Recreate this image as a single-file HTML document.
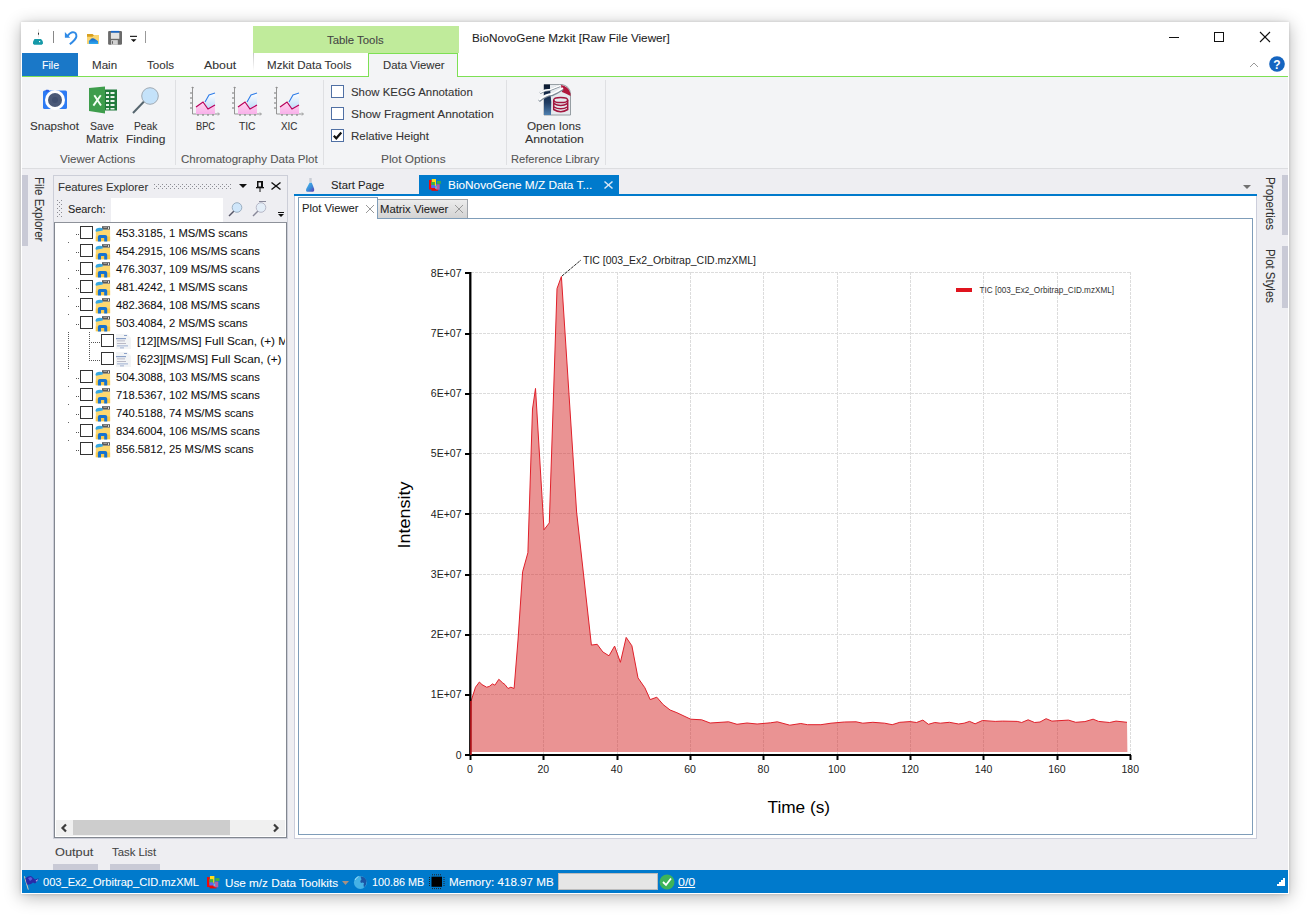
<!DOCTYPE html>
<html><head><meta charset="utf-8"><title>BioNovoGene Mzkit</title>
<style>
html,body{margin:0;padding:0;}
body{width:1311px;height:916px;position:relative;overflow:hidden;background:#ffffff;font-family:"Liberation Sans", sans-serif;}
.t{position:absolute;white-space:nowrap;font-family:"Liberation Sans", sans-serif;-webkit-text-stroke:0.08px currentColor;}
.r{position:absolute;}
svg.r{overflow:visible;}
</style></head><body>
<div class="r" style="left:21px;top:22px;width:1268px;height:872px;background:#ffffff;box-shadow:0 0 3px rgba(0,0,0,0.14),0 3px 16px rgba(0,0,0,0.30);"></div>
<div class="r" style="left:253px;top:26px;width:206px;height:27px;background:#c0eb9b;"></div>
<div class="t" style="left:327.00px;top:35.43px;font-size:11.3px;line-height:11.3px;color:#444;transform:scaleX(1.0053);transform-origin:0 0;">Table Tools</div>
<div class="t" style="left:472.00px;top:33.43px;font-size:11.3px;line-height:11.3px;color:#1e1e1e;transform:scaleX(1.0374);transform-origin:0 0;">BioNovoGene Mzkit [Raw File Viewer]</div>
<svg class="r" style="left:1160px;top:28px" width="120" height="20" viewBox="0 0 120 20"><line x1="9" y1="9.5" x2="19" y2="9.5" stroke="#111" stroke-width="1"/><rect x="54.5" y="4.5" width="9" height="9" fill="none" stroke="#111" stroke-width="1"/><line x1="100" y1="4" x2="110" y2="14" stroke="#111" stroke-width="1.1"/><line x1="110" y1="4" x2="100" y2="14" stroke="#111" stroke-width="1.1"/></svg>
<svg class="r" style="left:28px;top:26px" width="125" height="24" viewBox="0 0 125 24"><line x1="10.5" y1="3.2" x2="10.5" y2="11.5" stroke="#e4e4e4" stroke-width="1"/><rect x="10" y="6.7" width="1" height="2" fill="#333"/><path d="M6.5 12.9 L13 12.9 L14 14.2 L14.9 15.8 L14.9 17.6 L13.8 18.8 L6 18.8 L5 17.6 L5 15.8 L5.8 14.2 Z" fill="#1599a8"/><rect x="11" y="15" width="1.2" height="1.2" fill="#fff"/><line x1="25.5" y1="5" x2="25.5" y2="17" stroke="#888" stroke-width="1"/><path d="M39.5 10 Q42 6.2 45 6.1 Q48.6 6.3 48.4 10.5 Q48 13.3 41.8 18.3" fill="none" stroke="#2f8ae6" stroke-width="1.9"/><path d="M36.9 6 L36.9 11.8 L42.2 11.8 Z" fill="#2f8ae6"/><defs><linearGradient id="qbl" x1="0" y1="0" x2="0" y2="1"><stop offset="0" stop-color="#1262c8"/><stop offset="1" stop-color="#30aaf0"/></linearGradient></defs><rect x="59" y="9" width="12" height="9" fill="#f9d572"/><path d="M59 7.9 L64.5 7.9 L66 9.2 L64.5 10.7 L59 10.7 Z" fill="#d8a020"/><path d="M60.9 18 L60.9 15 L62.2 13.8 L63.5 12.6 L65 12.2 L66.5 12.8 L68 13.8 L70.1 15.2 L70.1 18 Z" fill="url(#qbl)"/><rect x="80.1" y="4.9" width="13.9" height="13.9" rx="1.2" fill="#6a6a6a"/><rect x="82.9" y="4.9" width="8.4" height="1.9" fill="#1a68c8"/><rect x="82.9" y="6.8" width="8.4" height="6" fill="#e2e2e2"/><rect x="83.1" y="14.1" width="6.7" height="4.7" fill="#d2d2d2"/><rect x="84.1" y="15.2" width="0.9" height="2.6" fill="#555"/><rect x="102" y="9.8" width="7" height="1.1" fill="#111"/><path d="M102.8 13.2 L108.5 13.2 L105.65 16.1 Z" fill="#111"/><line x1="117.5" y1="5" x2="117.5" y2="17" stroke="#999" stroke-width="1"/></svg>
<div class="r" style="left:22px;top:53px;width:56px;height:23px;background:#1a78c8;"></div>
<div class="t" style="left:41.50px;top:60.43px;font-size:11.3px;line-height:11.3px;color:#ffffff;transform:scaleX(0.9392);transform-origin:0 0;">File</div>
<div class="t" style="left:92.40px;top:60.43px;font-size:11.3px;line-height:11.3px;color:#333;transform:scaleX(1.0246);transform-origin:0 0;">Main</div>
<div class="t" style="left:146.70px;top:60.43px;font-size:11.3px;line-height:11.3px;color:#333;transform:scaleX(1.0266);transform-origin:0 0;">Tools</div>
<div class="t" style="left:203.90px;top:60.43px;font-size:11.3px;line-height:11.3px;color:#333;transform:scaleX(1.0884);transform-origin:0 0;">About</div>
<div class="r" style="left:253px;top:53px;width:1px;height:18px;background:linear-gradient(#c8c8c8,#ffffff);"></div>
<div class="t" style="left:267.40px;top:60.43px;font-size:11.3px;line-height:11.3px;color:#333;transform:scaleX(1.0231);transform-origin:0 0;">Mzkit Data Tools</div>
<div class="r" style="left:22px;top:76px;width:1266px;height:1px;background:#7de054;"></div>
<div class="r" style="left:368px;top:53px;width:90px;height:24px;background:#f3f4f6;box-sizing:border-box;border:1px solid #7de054;border-bottom:none;"></div>
<div class="t" style="left:382.60px;top:60.43px;font-size:11.3px;line-height:11.3px;color:#333;transform:scaleX(1.0033);transform-origin:0 0;">Data Viewer</div>
<svg class="r" style="left:1248px;top:57px" width="40" height="16" viewBox="0 0 40 16"><path d="M2 10 L6 6 L10 10" fill="none" stroke="#999" stroke-width="1"/><circle cx="29" cy="7" r="7.8" fill="#1565c0"/><text x="29" y="11.5" text-anchor="middle" font-family="Liberation Sans" font-weight="bold" font-size="12" fill="#fff">?</text></svg>
<div class="r" style="left:22px;top:77px;width:1266px;height:91px;background:#f3f4f6;"></div>
<div class="r" style="left:22px;top:168px;width:1266px;height:1px;background:#dcdde0;"></div>
<svg class="r" style="left:30px;top:82px" width="140" height="36" viewBox="0 0 140 36"><rect x="13" y="8.6" width="24" height="18.4" rx="1.5" fill="#2d7bf4"/><rect x="15.5" y="7.8" width="3.5" height="2" rx="0.8" fill="#2a5ee8"/><circle cx="25" cy="18" r="10" fill="#fff"/><circle cx="25" cy="18" r="7" fill="#4b5a78"/><circle cx="25" cy="18" r="3" fill="#405070"/><rect x="74" y="7.5" width="13" height="21" fill="#217a3c"/><path d="M59 6 L75 4.5 L75 31.5 L59 29 Z" fill="#3e9d4c"/><path d="M64.3 13.2 L71 23.6 M70.8 13.2 L63.4 23.6" stroke="#f4fff4" stroke-width="1.9" fill="none"/><g fill="#e8f4ea"><rect x="76" y="10" width="3" height="2"/><rect x="80.5" y="10" width="4" height="2"/><rect x="76" y="14" width="3" height="2"/><rect x="80.5" y="14" width="4" height="2"/><rect x="76" y="18" width="3" height="2"/><rect x="80.5" y="18" width="4" height="2"/><rect x="76" y="22" width="3" height="2"/><rect x="80.5" y="22" width="4" height="2"/><rect x="76" y="26" width="3" height="1.5"/><rect x="80.5" y="26" width="4" height="1.5"/></g><line x1="114.5" y1="19" x2="103" y2="31" stroke="#56666f" stroke-width="2"/><circle cx="120" cy="14" r="8.3" fill="#c4e2fa" stroke="#a0aab4" stroke-width="1"/></svg>
<div class="t" style="left:30.20px;top:121.43px;font-size:11.3px;line-height:11.3px;color:#333;transform:scaleX(1.0232);transform-origin:0 0;">Snapshot</div>
<div class="t" style="left:90.00px;top:121.43px;font-size:11.3px;line-height:11.3px;color:#333;transform:scaleX(0.9297);transform-origin:0 0;">Save</div>
<div class="t" style="left:86.30px;top:134.43px;font-size:11.3px;line-height:11.3px;color:#333;transform:scaleX(1.0458);transform-origin:0 0;">Matrix</div>
<div class="t" style="left:134.00px;top:121.43px;font-size:11.3px;line-height:11.3px;color:#333;transform:scaleX(0.9066);transform-origin:0 0;">Peak</div>
<div class="t" style="left:126.40px;top:134.43px;font-size:11.3px;line-height:11.3px;color:#333;transform:scaleX(1.0623);transform-origin:0 0;">Finding</div>
<div class="t" style="left:60.40px;top:154.43px;font-size:11.3px;line-height:11.3px;color:#555;transform:scaleX(1.0190);transform-origin:0 0;">Viewer Actions</div>
<div class="r" style="left:175px;top:80px;width:1px;height:85px;background:#dfe0e3;"></div>
<svg class="r" style="left:189px;top:84.5px" width="120" height="32" viewBox="0 0 120 32"><defs><linearGradient id="gb" x1="0" y1="0" x2="0" y2="1"><stop offset="0" stop-color="#fff"/><stop offset="1" stop-color="#a8d0f8"/></linearGradient><linearGradient id="gp" x1="0" y1="0" x2="0" y2="1"><stop offset="0" stop-color="#ffd6ee"/><stop offset="1" stop-color="#f8b0ea"/></linearGradient></defs><g transform="translate(1,0)"><path d="M2.5 2 L2.5 29 L29 29" fill="none" stroke="#8a8a8a" stroke-width="0.9"/><path d="M1.5 3 L2.5 2 L4 3" fill="none" stroke="#8a8a8a" stroke-width="0.8"/><path d="M28 27.5 L29.5 29 L28 30.5" fill="none" stroke="#8a8a8a" stroke-width="0.8"/><g stroke="#777" stroke-width="1"><line x1="0" y1="8" x2="2" y2="8"/><line x1="0" y1="13" x2="2" y2="13"/><line x1="0" y1="18" x2="2" y2="18"/><line x1="0" y1="23" x2="2" y2="23"/><line x1="8" y1="29" x2="8" y2="31"/><line x1="13" y1="29" x2="13" y2="31"/><line x1="18" y1="29" x2="18" y2="31"/><line x1="23" y1="29" x2="23" y2="31"/></g><path d="M15 17 L19 10 L22 9 L25 8 L25 29 L15 29 Z" fill="url(#gb)"/><path d="M6 22 L13 17 L18 24 L25 20 L25 29 L6 29 Z" fill="url(#gp)"/><path d="M15 17 L19 10 L22 9 L25 8" fill="none" stroke="#2f7de8" stroke-width="1.1"/><path d="M6 22 L13 17 L18 24 L25 20" fill="none" stroke="#b8005a" stroke-width="1.2"/></g><g transform="translate(43,0)"><path d="M2.5 2 L2.5 29 L29 29" fill="none" stroke="#8a8a8a" stroke-width="0.9"/><path d="M1.5 3 L2.5 2 L4 3" fill="none" stroke="#8a8a8a" stroke-width="0.8"/><path d="M28 27.5 L29.5 29 L28 30.5" fill="none" stroke="#8a8a8a" stroke-width="0.8"/><g stroke="#777" stroke-width="1"><line x1="0" y1="8" x2="2" y2="8"/><line x1="0" y1="13" x2="2" y2="13"/><line x1="0" y1="18" x2="2" y2="18"/><line x1="0" y1="23" x2="2" y2="23"/><line x1="8" y1="29" x2="8" y2="31"/><line x1="13" y1="29" x2="13" y2="31"/><line x1="18" y1="29" x2="18" y2="31"/><line x1="23" y1="29" x2="23" y2="31"/></g><path d="M15 17 L19 10 L22 9 L25 8 L25 29 L15 29 Z" fill="url(#gb)"/><path d="M6 22 L13 17 L18 24 L25 20 L25 29 L6 29 Z" fill="url(#gp)"/><path d="M15 17 L19 10 L22 9 L25 8" fill="none" stroke="#2f7de8" stroke-width="1.1"/><path d="M6 22 L13 17 L18 24 L25 20" fill="none" stroke="#b8005a" stroke-width="1.2"/></g><g transform="translate(85,0)"><path d="M2.5 2 L2.5 29 L29 29" fill="none" stroke="#8a8a8a" stroke-width="0.9"/><path d="M1.5 3 L2.5 2 L4 3" fill="none" stroke="#8a8a8a" stroke-width="0.8"/><path d="M28 27.5 L29.5 29 L28 30.5" fill="none" stroke="#8a8a8a" stroke-width="0.8"/><g stroke="#777" stroke-width="1"><line x1="0" y1="8" x2="2" y2="8"/><line x1="0" y1="13" x2="2" y2="13"/><line x1="0" y1="18" x2="2" y2="18"/><line x1="0" y1="23" x2="2" y2="23"/><line x1="8" y1="29" x2="8" y2="31"/><line x1="13" y1="29" x2="13" y2="31"/><line x1="18" y1="29" x2="18" y2="31"/><line x1="23" y1="29" x2="23" y2="31"/></g><path d="M15 17 L19 10 L22 9 L25 8 L25 29 L15 29 Z" fill="url(#gb)"/><path d="M6 22 L13 17 L18 24 L25 20 L25 29 L6 29 Z" fill="url(#gp)"/><path d="M15 17 L19 10 L22 9 L25 8" fill="none" stroke="#2f7de8" stroke-width="1.1"/><path d="M6 22 L13 17 L18 24 L25 20" fill="none" stroke="#b8005a" stroke-width="1.2"/></g></svg>
<div class="t" style="left:196.30px;top:121.43px;font-size:11.3px;line-height:11.3px;color:#333;transform:scaleX(0.8182);transform-origin:0 0;">BPC</div>
<div class="t" style="left:238.60px;top:121.43px;font-size:11.3px;line-height:11.3px;color:#333;transform:scaleX(0.9061);transform-origin:0 0;">TIC</div>
<div class="t" style="left:280.60px;top:121.43px;font-size:11.3px;line-height:11.3px;color:#333;transform:scaleX(0.8723);transform-origin:0 0;">XIC</div>
<div class="t" style="left:180.50px;top:154.43px;font-size:11.3px;line-height:11.3px;color:#555;transform:scaleX(1.0218);transform-origin:0 0;">Chromatography Data Plot</div>
<div class="r" style="left:323px;top:80px;width:1px;height:85px;background:#dfe0e3;"></div>
<div class="r" style="left:331px;top:85px;width:13px;height:13px;background:#fff;box-sizing:border-box;border:1px solid #5070a4;"></div>
<div class="t" style="left:351.30px;top:86.93px;font-size:11.3px;line-height:11.3px;color:#333;transform:scaleX(1.0100);transform-origin:0 0;">Show KEGG Annotation</div>
<div class="r" style="left:331px;top:107px;width:13px;height:13px;background:#fff;box-sizing:border-box;border:1px solid #5070a4;"></div>
<div class="t" style="left:351.30px;top:108.93px;font-size:11.3px;line-height:11.3px;color:#333;transform:scaleX(1.0486);transform-origin:0 0;">Show Fragment Annotation</div>
<div class="r" style="left:331px;top:129px;width:13px;height:13px;background:#fff;box-sizing:border-box;border:1px solid #5070a4;"></div>
<svg class="r" style="left:331px;top:129px" width="13" height="13" viewBox="0 0 13 13"><path d="M2.8 6.8 L5.3 9.3 L10.3 3.6" fill="none" stroke="#111" stroke-width="2.2"/></svg>
<div class="t" style="left:351.30px;top:130.93px;font-size:11.3px;line-height:11.3px;color:#333;transform:scaleX(1.0170);transform-origin:0 0;">Relative Height</div>
<div class="t" style="left:381.30px;top:154.43px;font-size:11.3px;line-height:11.3px;color:#555;transform:scaleX(1.0506);transform-origin:0 0;">Plot Options</div>
<div class="r" style="left:506px;top:80px;width:1px;height:85px;background:#dfe0e3;"></div>
<svg class="r" style="left:536px;top:82px" width="38" height="36" viewBox="0 0 38 36"><defs><linearGradient id="spn" x1="0" y1="0" x2="0" y2="1"><stop offset="0" stop-color="#0c1a30"/><stop offset="0.6" stop-color="#1f3c62"/><stop offset="1" stop-color="#4f80b0"/></linearGradient></defs><path d="M8 2.5 L26 2.5 Q34 4 34.5 12 L34.5 33 L8 33 Z" fill="#e6eaee" stroke="#8c949a" stroke-width="0.9"/><path d="M25 3 Q32.5 4 34.5 11.5 L34.5 14 Q30 11.5 26 10 Z" fill="#b0183c"/><path d="M8 2.5 L14 2.5 L14 6 Q16 20 15 33 L8 33 Z" fill="url(#spn)"/><path d="M3 19 Q10 13 16 13 Q21 11 27 7" fill="none" stroke="#7d8a96" stroke-width="2.6"/><path d="M3 18 Q10 12 16 12 Q21 10 27 6" fill="none" stroke="#ffffff" stroke-width="1.8"/><path d="M4 11 Q9 8 14 8 Q19 6 24 4" fill="none" stroke="#7d8a96" stroke-width="2.2"/><path d="M4 10.5 Q9 7.5 14 7.5 Q19 5.5 24 3.5" fill="none" stroke="#ffffff" stroke-width="1.5"/><g fill="none" stroke="#a3173f" stroke-width="1.5"><ellipse cx="24.7" cy="18" rx="7" ry="2.6"/><path d="M17.7 18 L17.7 27.5 Q24.7 32 31.7 27.5 L31.7 18"/><path d="M17.7 21.5 Q24.7 25.5 31.7 21.5"/><path d="M17.7 24.8 Q24.7 28.8 31.7 24.8"/></g></svg>
<div class="t" style="left:527.00px;top:121.03px;font-size:11.3px;line-height:11.3px;color:#333;transform:scaleX(1.0347);transform-origin:0 0;">Open Ions</div>
<div class="t" style="left:525.00px;top:133.73px;font-size:11.3px;line-height:11.3px;color:#333;transform:scaleX(1.0892);transform-origin:0 0;">Annotation</div>
<div class="t" style="left:511.10px;top:154.43px;font-size:11.3px;line-height:11.3px;color:#555;transform:scaleX(0.9821);transform-origin:0 0;">Reference Library</div>
<div class="r" style="left:605px;top:80px;width:1px;height:85px;background:#dfe0e3;"></div>
<div class="r" style="left:22px;top:169px;width:1266px;height:701px;background:#eeeef2;"></div>
<div class="r" style="left:22px;top:175px;width:6px;height:71px;background:#c9cad6;"></div>
<div class="t" style="left:32px;top:176.5px;font-size:12px;line-height:14px;color:#333;writing-mode:vertical-rl;transform:scaleY(0.955);transform-origin:0 0;">File Explorer</div>
<div class="r" style="left:1282px;top:175px;width:6px;height:60px;background:#c9cad6;"></div>
<div class="t" style="left:1263px;top:176.5px;font-size:12px;line-height:14px;color:#333;writing-mode:vertical-rl;transform:scaleY(0.97);transform-origin:0 0;">Properties</div>
<div class="r" style="left:1282px;top:246px;width:6px;height:62px;background:#c9cad6;"></div>
<div class="t" style="left:1263px;top:249px;font-size:12px;line-height:14px;color:#333;writing-mode:vertical-rl;transform:scaleY(0.952);transform-origin:0 0;">Plot Styles</div>
<div class="r" style="left:53px;top:175px;width:235px;height:664px;background:#eeeef2;box-sizing:border-box;border:1px solid #ccced8;"></div>
<div class="t" style="left:58.40px;top:182.03px;font-size:11.3px;line-height:11.3px;color:#333;transform:scaleX(1.0045);transform-origin:0 0;">Features Explorer</div>
<svg class="r" style="left:154px;top:184px" width="78" height="5" viewBox="0 0 78 5"><defs><pattern id="dg" width="4" height="4" patternUnits="userSpaceOnUse"><rect x="0" y="0" width="1" height="1" fill="#8c8c94"/><rect x="2" y="2" width="1" height="1" fill="#8c8c94"/></pattern></defs><rect width="78" height="5" fill="url(#dg)"/></svg>
<svg class="r" style="left:236px;top:178px" width="50" height="16" viewBox="0 0 50 16"><path d="M3 6 L11 6 L7 10 Z" fill="#111"/><rect x="21.75" y="3.75" width="4.5" height="5.5" fill="none" stroke="#111" stroke-width="1.5"/><rect x="25" y="3" width="1.5" height="6" fill="#111"/><rect x="20" y="9" width="8" height="1.3" fill="#111"/><rect x="23.5" y="10" width="1" height="4" fill="#111"/><line x1="35.5" y1="4.5" x2="44.5" y2="11.5" stroke="#111" stroke-width="1.4"/><line x1="44.5" y1="4.5" x2="35.5" y2="11.5" stroke="#111" stroke-width="1.4"/></svg>
<svg class="r" style="left:57px;top:200px" width="5" height="17" viewBox="0 0 5 17"><defs><pattern id="dg2" width="4" height="4" patternUnits="userSpaceOnUse"><rect x="0" y="0" width="1" height="1" fill="#8c8c94"/><rect x="2" y="2" width="1" height="1" fill="#8c8c94"/></pattern></defs><rect width="5" height="17" fill="url(#dg2)"/></svg>
<div class="t" style="left:68.00px;top:204.43px;font-size:11.3px;line-height:11.3px;color:#1e1e1e;transform:scaleX(0.9639);transform-origin:0 0;">Search:</div>
<div class="r" style="left:111px;top:198px;width:112px;height:24px;background:#ffffff;"></div>
<svg class="r" style="left:226px;top:200px" width="62" height="20" viewBox="0 0 62 20"><line x1="3" y1="16" x2="8" y2="11" stroke="#556" stroke-width="1.5"/><circle cx="11" cy="7.5" r="4.8" fill="#cfe6fa" stroke="#8aa0b4" stroke-width="0.8"/><line x1="27" y1="16" x2="32" y2="11" stroke="#889" stroke-width="1.5"/><circle cx="35" cy="7.5" r="4.8" fill="#e4eef8" stroke="#aab" stroke-width="0.8"/><rect x="33" y="1" width="7" height="1" fill="#889"/><rect x="52" y="12" width="6" height="1" fill="#111"/><path d="M52 14 L58 14 L55 17 Z" fill="#111"/></svg>
<div class="r" style="left:54px;top:222px;width:233px;height:616px;background:#ffffff;box-sizing:border-box;border:1px solid #828790;border-top-color:#8e929a;"></div>
<div class="r" style="left:0;top:0;width:285px;height:820px;overflow:hidden;"><div class="r" style="left:80px;top:226px;width:13px;height:13px;background:#fff;box-sizing:border-box;border:1px solid #333;"></div><svg class="r" style="left:95px;top:226px" width="16" height="16" viewBox="0 0 16 16"><path d="M0.8 4.6 L7 4.6 L8.6 3.6 L15.1 3.6 L15.1 15.2 L0.8 15.2 Z" fill="#fcd870"/><rect x="0.8" y="10.5" width="14.3" height="4.7" fill="#f9ca4c"/><rect x="7" y="0.2" width="8" height="3.4" fill="#5a5a5a"/><rect x="8.5" y="1" width="3.5" height="1" fill="#9a9a9a"/><rect x="13" y="1" width="1" height="2" fill="#ddd"/><path d="M0.5 4.5 Q0.5 2.3 3 2.1 Q5 1.5 7.5 2.2 L7.8 4.6 L1 5.8 Z" fill="#35a6e0"/><path d="M2.9 15.4 L2.9 10.8 Q2.9 8.9 4.9 8.9 L10.2 8.9 Q12.2 8.9 12.2 10.8 L12.2 15.4 L9.2 15.4 L9.2 12 L6 12 L6 15.4 Z" fill="#1673d0"/></svg><div class="t" style="left:115.50px;top:228.43px;font-size:11.3px;line-height:11.3px;color:#111;transform:scaleX(0.9932);transform-origin:0 0;">453.3185, 1 MS/MS scans</div><div class="r" style="left:76px;top:234px;width:3px;height:1px;background:repeating-linear-gradient(90deg,#555 0 1px,transparent 1px 2px);"></div><div class="r" style="left:68px;top:242px;width:1px;height:1px;background:#666;"></div><div class="r" style="left:80px;top:244px;width:13px;height:13px;background:#fff;box-sizing:border-box;border:1px solid #333;"></div><svg class="r" style="left:95px;top:244px" width="16" height="16" viewBox="0 0 16 16"><path d="M0.8 4.6 L7 4.6 L8.6 3.6 L15.1 3.6 L15.1 15.2 L0.8 15.2 Z" fill="#fcd870"/><rect x="0.8" y="10.5" width="14.3" height="4.7" fill="#f9ca4c"/><rect x="7" y="0.2" width="8" height="3.4" fill="#5a5a5a"/><rect x="8.5" y="1" width="3.5" height="1" fill="#9a9a9a"/><rect x="13" y="1" width="1" height="2" fill="#ddd"/><path d="M0.5 4.5 Q0.5 2.3 3 2.1 Q5 1.5 7.5 2.2 L7.8 4.6 L1 5.8 Z" fill="#35a6e0"/><path d="M2.9 15.4 L2.9 10.8 Q2.9 8.9 4.9 8.9 L10.2 8.9 Q12.2 8.9 12.2 10.8 L12.2 15.4 L9.2 15.4 L9.2 12 L6 12 L6 15.4 Z" fill="#1673d0"/></svg><div class="t" style="left:115.50px;top:246.43px;font-size:11.3px;line-height:11.3px;color:#111;transform:scaleX(0.9917);transform-origin:0 0;">454.2915, 106 MS/MS scans</div><div class="r" style="left:76px;top:252px;width:3px;height:1px;background:repeating-linear-gradient(90deg,#555 0 1px,transparent 1px 2px);"></div><div class="r" style="left:68px;top:260px;width:1px;height:1px;background:#666;"></div><div class="r" style="left:80px;top:262px;width:13px;height:13px;background:#fff;box-sizing:border-box;border:1px solid #333;"></div><svg class="r" style="left:95px;top:262px" width="16" height="16" viewBox="0 0 16 16"><path d="M0.8 4.6 L7 4.6 L8.6 3.6 L15.1 3.6 L15.1 15.2 L0.8 15.2 Z" fill="#fcd870"/><rect x="0.8" y="10.5" width="14.3" height="4.7" fill="#f9ca4c"/><rect x="7" y="0.2" width="8" height="3.4" fill="#5a5a5a"/><rect x="8.5" y="1" width="3.5" height="1" fill="#9a9a9a"/><rect x="13" y="1" width="1" height="2" fill="#ddd"/><path d="M0.5 4.5 Q0.5 2.3 3 2.1 Q5 1.5 7.5 2.2 L7.8 4.6 L1 5.8 Z" fill="#35a6e0"/><path d="M2.9 15.4 L2.9 10.8 Q2.9 8.9 4.9 8.9 L10.2 8.9 Q12.2 8.9 12.2 10.8 L12.2 15.4 L9.2 15.4 L9.2 12 L6 12 L6 15.4 Z" fill="#1673d0"/></svg><div class="t" style="left:115.50px;top:264.43px;font-size:11.3px;line-height:11.3px;color:#111;transform:scaleX(0.9917);transform-origin:0 0;">476.3037, 109 MS/MS scans</div><div class="r" style="left:76px;top:270px;width:3px;height:1px;background:repeating-linear-gradient(90deg,#555 0 1px,transparent 1px 2px);"></div><div class="r" style="left:68px;top:278px;width:1px;height:1px;background:#666;"></div><div class="r" style="left:80px;top:280px;width:13px;height:13px;background:#fff;box-sizing:border-box;border:1px solid #333;"></div><svg class="r" style="left:95px;top:280px" width="16" height="16" viewBox="0 0 16 16"><path d="M0.8 4.6 L7 4.6 L8.6 3.6 L15.1 3.6 L15.1 15.2 L0.8 15.2 Z" fill="#fcd870"/><rect x="0.8" y="10.5" width="14.3" height="4.7" fill="#f9ca4c"/><rect x="7" y="0.2" width="8" height="3.4" fill="#5a5a5a"/><rect x="8.5" y="1" width="3.5" height="1" fill="#9a9a9a"/><rect x="13" y="1" width="1" height="2" fill="#ddd"/><path d="M0.5 4.5 Q0.5 2.3 3 2.1 Q5 1.5 7.5 2.2 L7.8 4.6 L1 5.8 Z" fill="#35a6e0"/><path d="M2.9 15.4 L2.9 10.8 Q2.9 8.9 4.9 8.9 L10.2 8.9 Q12.2 8.9 12.2 10.8 L12.2 15.4 L9.2 15.4 L9.2 12 L6 12 L6 15.4 Z" fill="#1673d0"/></svg><div class="t" style="left:115.50px;top:282.43px;font-size:11.3px;line-height:11.3px;color:#111;transform:scaleX(0.9932);transform-origin:0 0;">481.4242, 1 MS/MS scans</div><div class="r" style="left:76px;top:288px;width:3px;height:1px;background:repeating-linear-gradient(90deg,#555 0 1px,transparent 1px 2px);"></div><div class="r" style="left:68px;top:296px;width:1px;height:1px;background:#666;"></div><div class="r" style="left:80px;top:298px;width:13px;height:13px;background:#fff;box-sizing:border-box;border:1px solid #333;"></div><svg class="r" style="left:95px;top:298px" width="16" height="16" viewBox="0 0 16 16"><path d="M0.8 4.6 L7 4.6 L8.6 3.6 L15.1 3.6 L15.1 15.2 L0.8 15.2 Z" fill="#fcd870"/><rect x="0.8" y="10.5" width="14.3" height="4.7" fill="#f9ca4c"/><rect x="7" y="0.2" width="8" height="3.4" fill="#5a5a5a"/><rect x="8.5" y="1" width="3.5" height="1" fill="#9a9a9a"/><rect x="13" y="1" width="1" height="2" fill="#ddd"/><path d="M0.5 4.5 Q0.5 2.3 3 2.1 Q5 1.5 7.5 2.2 L7.8 4.6 L1 5.8 Z" fill="#35a6e0"/><path d="M2.9 15.4 L2.9 10.8 Q2.9 8.9 4.9 8.9 L10.2 8.9 Q12.2 8.9 12.2 10.8 L12.2 15.4 L9.2 15.4 L9.2 12 L6 12 L6 15.4 Z" fill="#1673d0"/></svg><div class="t" style="left:115.50px;top:300.43px;font-size:11.3px;line-height:11.3px;color:#111;transform:scaleX(0.9917);transform-origin:0 0;">482.3684, 108 MS/MS scans</div><div class="r" style="left:76px;top:306px;width:3px;height:1px;background:repeating-linear-gradient(90deg,#555 0 1px,transparent 1px 2px);"></div><div class="r" style="left:68px;top:314px;width:1px;height:1px;background:#666;"></div><div class="r" style="left:80px;top:316px;width:13px;height:13px;background:#fff;box-sizing:border-box;border:1px solid #333;"></div><svg class="r" style="left:95px;top:316px" width="16" height="16" viewBox="0 0 16 16"><path d="M0.8 4.6 L7 4.6 L8.6 3.6 L15.1 3.6 L15.1 15.2 L0.8 15.2 Z" fill="#fcd870"/><rect x="0.8" y="10.5" width="14.3" height="4.7" fill="#f9ca4c"/><rect x="7" y="0.2" width="8" height="3.4" fill="#5a5a5a"/><rect x="8.5" y="1" width="3.5" height="1" fill="#9a9a9a"/><rect x="13" y="1" width="1" height="2" fill="#ddd"/><path d="M0.5 4.5 Q0.5 2.3 3 2.1 Q5 1.5 7.5 2.2 L7.8 4.6 L1 5.8 Z" fill="#35a6e0"/><path d="M2.9 15.4 L2.9 10.8 Q2.9 8.9 4.9 8.9 L10.2 8.9 Q12.2 8.9 12.2 10.8 L12.2 15.4 L9.2 15.4 L9.2 12 L6 12 L6 15.4 Z" fill="#1673d0"/></svg><div class="t" style="left:115.50px;top:318.43px;font-size:11.3px;line-height:11.3px;color:#111;transform:scaleX(0.9932);transform-origin:0 0;">503.4084, 2 MS/MS scans</div><div class="r" style="left:76px;top:324px;width:3px;height:1px;background:repeating-linear-gradient(90deg,#555 0 1px,transparent 1px 2px);"></div><div class="r" style="left:101px;top:334px;width:13px;height:13px;background:#fff;box-sizing:border-box;border:1px solid #333;"></div><svg class="r" style="left:115px;top:333px" width="17" height="17" viewBox="0 0 17 17"><path d="M1 1 L12 1 L16 5 L16 16 L1 16 Z" fill="#f2f4f6"/><g fill="#8aa0c8"><rect x="1" y="5" width="10" height="1.2"/><rect x="2" y="7.5" width="8" height="0.8" fill="#aab"/><rect x="2" y="10" width="9" height="0.8" fill="#aab"/><rect x="2" y="12.5" width="11" height="0.8"/><rect x="5" y="14.5" width="4" height="0.8"/><rect x="9" y="2" width="3" height="1"/></g></svg><div class="t" style="left:137.30px;top:336.43px;font-size:11.3px;line-height:11.3px;color:#111;transform:scaleX(1.0393);transform-origin:0 0;">[12][MS/MS] Full Scan, (+) MS</div><div class="r" style="left:91px;top:342px;width:9px;height:1px;background:repeating-linear-gradient(90deg,#555 0 1px,transparent 1px 2px);"></div><div class="r" style="left:101px;top:352px;width:13px;height:13px;background:#fff;box-sizing:border-box;border:1px solid #333;"></div><svg class="r" style="left:115px;top:351px" width="17" height="17" viewBox="0 0 17 17"><path d="M1 1 L12 1 L16 5 L16 16 L1 16 Z" fill="#f2f4f6"/><g fill="#8aa0c8"><rect x="1" y="5" width="10" height="1.2"/><rect x="2" y="7.5" width="8" height="0.8" fill="#aab"/><rect x="2" y="10" width="9" height="0.8" fill="#aab"/><rect x="2" y="12.5" width="11" height="0.8"/><rect x="5" y="14.5" width="4" height="0.8"/><rect x="9" y="2" width="3" height="1"/></g></svg><div class="t" style="left:137.30px;top:354.43px;font-size:11.3px;line-height:11.3px;color:#111;transform:scaleX(1.0391);transform-origin:0 0;">[623][MS/MS] Full Scan, (+) MS</div><div class="r" style="left:91px;top:360px;width:9px;height:1px;background:repeating-linear-gradient(90deg,#555 0 1px,transparent 1px 2px);"></div><div class="r" style="left:80px;top:370px;width:13px;height:13px;background:#fff;box-sizing:border-box;border:1px solid #333;"></div><svg class="r" style="left:95px;top:370px" width="16" height="16" viewBox="0 0 16 16"><path d="M0.8 4.6 L7 4.6 L8.6 3.6 L15.1 3.6 L15.1 15.2 L0.8 15.2 Z" fill="#fcd870"/><rect x="0.8" y="10.5" width="14.3" height="4.7" fill="#f9ca4c"/><rect x="7" y="0.2" width="8" height="3.4" fill="#5a5a5a"/><rect x="8.5" y="1" width="3.5" height="1" fill="#9a9a9a"/><rect x="13" y="1" width="1" height="2" fill="#ddd"/><path d="M0.5 4.5 Q0.5 2.3 3 2.1 Q5 1.5 7.5 2.2 L7.8 4.6 L1 5.8 Z" fill="#35a6e0"/><path d="M2.9 15.4 L2.9 10.8 Q2.9 8.9 4.9 8.9 L10.2 8.9 Q12.2 8.9 12.2 10.8 L12.2 15.4 L9.2 15.4 L9.2 12 L6 12 L6 15.4 Z" fill="#1673d0"/></svg><div class="t" style="left:115.50px;top:372.43px;font-size:11.3px;line-height:11.3px;color:#111;transform:scaleX(0.9917);transform-origin:0 0;">504.3088, 103 MS/MS scans</div><div class="r" style="left:76px;top:378px;width:3px;height:1px;background:repeating-linear-gradient(90deg,#555 0 1px,transparent 1px 2px);"></div><div class="r" style="left:68px;top:386px;width:1px;height:1px;background:#666;"></div><div class="r" style="left:80px;top:388px;width:13px;height:13px;background:#fff;box-sizing:border-box;border:1px solid #333;"></div><svg class="r" style="left:95px;top:388px" width="16" height="16" viewBox="0 0 16 16"><path d="M0.8 4.6 L7 4.6 L8.6 3.6 L15.1 3.6 L15.1 15.2 L0.8 15.2 Z" fill="#fcd870"/><rect x="0.8" y="10.5" width="14.3" height="4.7" fill="#f9ca4c"/><rect x="7" y="0.2" width="8" height="3.4" fill="#5a5a5a"/><rect x="8.5" y="1" width="3.5" height="1" fill="#9a9a9a"/><rect x="13" y="1" width="1" height="2" fill="#ddd"/><path d="M0.5 4.5 Q0.5 2.3 3 2.1 Q5 1.5 7.5 2.2 L7.8 4.6 L1 5.8 Z" fill="#35a6e0"/><path d="M2.9 15.4 L2.9 10.8 Q2.9 8.9 4.9 8.9 L10.2 8.9 Q12.2 8.9 12.2 10.8 L12.2 15.4 L9.2 15.4 L9.2 12 L6 12 L6 15.4 Z" fill="#1673d0"/></svg><div class="t" style="left:115.50px;top:390.43px;font-size:11.3px;line-height:11.3px;color:#111;transform:scaleX(0.9917);transform-origin:0 0;">718.5367, 102 MS/MS scans</div><div class="r" style="left:76px;top:396px;width:3px;height:1px;background:repeating-linear-gradient(90deg,#555 0 1px,transparent 1px 2px);"></div><div class="r" style="left:68px;top:404px;width:1px;height:1px;background:#666;"></div><div class="r" style="left:80px;top:406px;width:13px;height:13px;background:#fff;box-sizing:border-box;border:1px solid #333;"></div><svg class="r" style="left:95px;top:406px" width="16" height="16" viewBox="0 0 16 16"><path d="M0.8 4.6 L7 4.6 L8.6 3.6 L15.1 3.6 L15.1 15.2 L0.8 15.2 Z" fill="#fcd870"/><rect x="0.8" y="10.5" width="14.3" height="4.7" fill="#f9ca4c"/><rect x="7" y="0.2" width="8" height="3.4" fill="#5a5a5a"/><rect x="8.5" y="1" width="3.5" height="1" fill="#9a9a9a"/><rect x="13" y="1" width="1" height="2" fill="#ddd"/><path d="M0.5 4.5 Q0.5 2.3 3 2.1 Q5 1.5 7.5 2.2 L7.8 4.6 L1 5.8 Z" fill="#35a6e0"/><path d="M2.9 15.4 L2.9 10.8 Q2.9 8.9 4.9 8.9 L10.2 8.9 Q12.2 8.9 12.2 10.8 L12.2 15.4 L9.2 15.4 L9.2 12 L6 12 L6 15.4 Z" fill="#1673d0"/></svg><div class="t" style="left:115.50px;top:408.43px;font-size:11.3px;line-height:11.3px;color:#111;transform:scaleX(0.9920);transform-origin:0 0;">740.5188, 74 MS/MS scans</div><div class="r" style="left:76px;top:414px;width:3px;height:1px;background:repeating-linear-gradient(90deg,#555 0 1px,transparent 1px 2px);"></div><div class="r" style="left:68px;top:422px;width:1px;height:1px;background:#666;"></div><div class="r" style="left:80px;top:424px;width:13px;height:13px;background:#fff;box-sizing:border-box;border:1px solid #333;"></div><svg class="r" style="left:95px;top:424px" width="16" height="16" viewBox="0 0 16 16"><path d="M0.8 4.6 L7 4.6 L8.6 3.6 L15.1 3.6 L15.1 15.2 L0.8 15.2 Z" fill="#fcd870"/><rect x="0.8" y="10.5" width="14.3" height="4.7" fill="#f9ca4c"/><rect x="7" y="0.2" width="8" height="3.4" fill="#5a5a5a"/><rect x="8.5" y="1" width="3.5" height="1" fill="#9a9a9a"/><rect x="13" y="1" width="1" height="2" fill="#ddd"/><path d="M0.5 4.5 Q0.5 2.3 3 2.1 Q5 1.5 7.5 2.2 L7.8 4.6 L1 5.8 Z" fill="#35a6e0"/><path d="M2.9 15.4 L2.9 10.8 Q2.9 8.9 4.9 8.9 L10.2 8.9 Q12.2 8.9 12.2 10.8 L12.2 15.4 L9.2 15.4 L9.2 12 L6 12 L6 15.4 Z" fill="#1673d0"/></svg><div class="t" style="left:115.50px;top:426.43px;font-size:11.3px;line-height:11.3px;color:#111;transform:scaleX(0.9917);transform-origin:0 0;">834.6004, 106 MS/MS scans</div><div class="r" style="left:76px;top:432px;width:3px;height:1px;background:repeating-linear-gradient(90deg,#555 0 1px,transparent 1px 2px);"></div><div class="r" style="left:68px;top:440px;width:1px;height:1px;background:#666;"></div><div class="r" style="left:80px;top:442px;width:13px;height:13px;background:#fff;box-sizing:border-box;border:1px solid #333;"></div><svg class="r" style="left:95px;top:442px" width="16" height="16" viewBox="0 0 16 16"><path d="M0.8 4.6 L7 4.6 L8.6 3.6 L15.1 3.6 L15.1 15.2 L0.8 15.2 Z" fill="#fcd870"/><rect x="0.8" y="10.5" width="14.3" height="4.7" fill="#f9ca4c"/><rect x="7" y="0.2" width="8" height="3.4" fill="#5a5a5a"/><rect x="8.5" y="1" width="3.5" height="1" fill="#9a9a9a"/><rect x="13" y="1" width="1" height="2" fill="#ddd"/><path d="M0.5 4.5 Q0.5 2.3 3 2.1 Q5 1.5 7.5 2.2 L7.8 4.6 L1 5.8 Z" fill="#35a6e0"/><path d="M2.9 15.4 L2.9 10.8 Q2.9 8.9 4.9 8.9 L10.2 8.9 Q12.2 8.9 12.2 10.8 L12.2 15.4 L9.2 15.4 L9.2 12 L6 12 L6 15.4 Z" fill="#1673d0"/></svg><div class="t" style="left:115.50px;top:444.43px;font-size:11.3px;line-height:11.3px;color:#111;transform:scaleX(0.9920);transform-origin:0 0;">856.5812, 25 MS/MS scans</div><div class="r" style="left:76px;top:450px;width:3px;height:1px;background:repeating-linear-gradient(90deg,#555 0 1px,transparent 1px 2px);"></div><div class="r" style="left:68px;top:332px;width:1px;height:37px;background:repeating-linear-gradient(180deg,#555 0 1px,transparent 1px 2px);"></div><div class="r" style="left:89px;top:332px;width:1px;height:29px;background:repeating-linear-gradient(180deg,#555 0 1px,transparent 1px 2px);"></div></div>
<div class="r" style="left:56px;top:820px;width:229px;height:16px;background:#f0f0f0;"></div>
<div class="r" style="left:73px;top:820px;width:157px;height:15px;background:#cdcdcd;"></div>
<svg class="r" style="left:58px;top:822px" width="226" height="12" viewBox="0 0 226 12"><path d="M8 2.5 L4.5 6 L8 9.5" fill="none" stroke="#3c3c3c" stroke-width="2.2"/><path d="M216 2.5 L219.5 6 L216 9.5" fill="none" stroke="#3c3c3c" stroke-width="2.2"/></svg>
<div class="t" style="left:55.00px;top:847.43px;font-size:11.3px;line-height:11.3px;color:#444;transform:scaleX(1.1302);transform-origin:0 0;">Output</div>
<div class="t" style="left:112.20px;top:847.43px;font-size:11.3px;line-height:11.3px;color:#444;transform:scaleX(1.0046);transform-origin:0 0;">Task List</div>
<div class="r" style="left:53px;top:864px;width:45px;height:6px;background:#c9cad6;"></div>
<div class="r" style="left:110px;top:864px;width:50px;height:6px;background:#c9cad6;"></div>
<svg class="r" style="left:302px;top:176px" width="16" height="18" viewBox="0 0 16 18"><defs><linearGradient id="flk" x1="0" y1="0" x2="1" y2="1"><stop offset="0" stop-color="#48c0f0"/><stop offset="0.55" stop-color="#3a8ad8"/><stop offset="1" stop-color="#5a38b0"/></linearGradient></defs><rect x="7.3" y="2" width="2.4" height="4.5" fill="#c8ccd4"/><path d="M7.5 6.8 L9.8 6.8 L12.2 13 Q12.6 15.7 11 15.7 L5.2 15.7 Q3.6 15.7 4.2 13 Z" fill="url(#flk)"/></svg>
<div class="t" style="left:331.20px;top:180.43px;font-size:11.3px;line-height:11.3px;color:#1e1e1e;transform:scaleX(0.9962);transform-origin:0 0;">Start Page</div>
<div class="r" style="left:419px;top:175px;width:200px;height:19px;background:#007acc;"></div>
<svg class="r" style="left:429px;top:179px" width="13.0" height="13.0" viewBox="0 0 13 13"><rect x="0" y="1" width="2.6" height="9" fill="#f00a0a"/><rect x="0" y="8" width="9" height="2.5" fill="#f00a0a"/><rect x="2.5" y="9.5" width="6.5" height="2.3" fill="#e80808"/><rect x="2.8" y="0" width="4.2" height="7" fill="#ffdc18"/><rect x="2.2" y="3" width="3.7" height="3.6" fill="#3cb048"/><rect x="8" y="2" width="3.8" height="2.8" fill="#40b040"/><rect x="2.2" y="6" width="3.9" height="3" fill="#5a68f0"/><rect x="7.2" y="5.3" width="3.5" height="5.4" fill="#b060a8"/><rect x="6.1" y="7.2" width="1.7" height="2.6" fill="#60b8f0"/></svg>
<div class="t" style="left:448.40px;top:180.43px;font-size:11.3px;line-height:11.3px;color:#ffffff;transform:scaleX(1.0459);transform-origin:0 0;">BioNovoGene M/Z Data T...</div>
<svg class="r" style="left:602px;top:179px" width="12" height="12" viewBox="0 0 12 12"><line x1="2.5" y1="2.5" x2="10.5" y2="9.5" stroke="#d8e8f6" stroke-width="1.5"/><line x1="10.5" y1="2.5" x2="2.5" y2="9.5" stroke="#d8e8f6" stroke-width="1.5"/></svg>
<svg class="r" style="left:1242px;top:184px" width="10" height="6" viewBox="0 0 10 6"><path d="M1 1 L9 1 L5 5 Z" fill="#717171"/></svg>
<div class="r" style="left:294px;top:194px;width:963px;height:645px;background:#ffffff;box-sizing:border-box;border:1px solid #cccedb;"></div>
<div class="r" style="left:294px;top:194px;width:963px;height:2px;background:#007acc;"></div>
<div class="r" style="left:377px;top:199px;width:91px;height:20px;background:linear-gradient(#ececec,#d2d2d2);box-sizing:border-box;border:1px solid #a0a4aa;border-bottom:none;"></div>
<div class="t" style="left:380.00px;top:204.43px;font-size:11.3px;line-height:11.3px;color:#1e1e1e;transform:scaleX(1.0000);transform-origin:0 0;">Matrix Viewer</div>
<svg class="r" style="left:454px;top:204px" width="10" height="10" viewBox="0 0 10 10"><line x1="1" y1="1" x2="9" y2="9" stroke="#999" stroke-width="1"/><line x1="9" y1="1" x2="1" y2="9" stroke="#999" stroke-width="1"/></svg>
<div class="r" style="left:298px;top:218px;width:955px;height:617px;background:#ffffff;box-sizing:border-box;border:1px solid #7f9db9;"></div>
<div class="r" style="left:298px;top:197px;width:80px;height:22px;background:#ffffff;box-sizing:border-box;border:1px solid #7f9db9;border-bottom:none;"></div>
<div class="t" style="left:302.40px;top:203.43px;font-size:11.3px;line-height:11.3px;color:#1e1e1e;transform:scaleX(0.9912);transform-origin:0 0;">Plot Viewer</div>
<svg class="r" style="left:365px;top:204px" width="10" height="10" viewBox="0 0 10 10"><line x1="1" y1="1" x2="9" y2="9" stroke="#999" stroke-width="1"/><line x1="9" y1="1" x2="1" y2="9" stroke="#999" stroke-width="1"/></svg>
<svg class="r" style="left:299px;top:219px" width="953" height="615" viewBox="299 219 953 615"><g stroke="#dcdcdc" stroke-width="1" stroke-dasharray="3 1" fill="none"><line x1="543.5" y1="272" x2="543.5" y2="754" /><line x1="617.5" y1="272" x2="617.5" y2="754" /><line x1="690.5" y1="272" x2="690.5" y2="754" /><line x1="763.5" y1="272" x2="763.5" y2="754" /><line x1="837.5" y1="272" x2="837.5" y2="754" /><line x1="910.5" y1="272" x2="910.5" y2="754" /><line x1="983.5" y1="272" x2="983.5" y2="754" /><line x1="1057.5" y1="272" x2="1057.5" y2="754" /><line x1="1130.5" y1="272" x2="1130.5" y2="754" /><line x1="471" y1="694.5" x2="1131" y2="694.5" /><line x1="471" y1="634.5" x2="1131" y2="634.5" /><line x1="471" y1="574.5" x2="1131" y2="574.5" /><line x1="471" y1="513.5" x2="1131" y2="513.5" /><line x1="471" y1="453.5" x2="1131" y2="453.5" /><line x1="471" y1="393.5" x2="1131" y2="393.5" /><line x1="471" y1="333.5" x2="1131" y2="333.5" /><line x1="471" y1="272.5" x2="1131" y2="272.5" /></g><path d="M470.2 752.0 L470.9 701.6 L475.5 687.2 L479.4 682.0 L482.0 684.6 L486.6 687.2 L489.2 686.5 L492.5 683.9 L494.9 685.2 L498.8 679.3 L502.4 682.6 L505.0 684.6 L508.0 688.5 L510.9 687.2 L514.1 688.5 L518.0 640.0 L522.6 571.8 L527.9 552.7 L532.5 409.0 L535.5 388.4 L544.0 529.8 L549.3 522.9 L557.0 288.6 L561.4 276.5 L576.6 512.0 L591.4 645.1 L597.2 644.3 L602.8 651.9 L609.0 655.8 L614.6 646.1 L620.4 662.3 L626.2 637.4 L631.9 645.8 L638.0 677.9 L644.9 687.8 L650.2 699.6 L656.8 697.2 L663.2 704.6 L670.1 710.0 L676.9 712.7 L690.7 719.2 L701.7 719.8 L710.1 723.0 L728.6 721.8 L737.0 724.3 L747.0 723.0 L757.1 724.0 L770.5 722.8 L777.3 721.8 L789.8 725.2 L800.8 723.5 L807.5 724.7 L820.9 724.7 L831.0 723.2 L844.4 722.0 L856.1 721.8 L862.8 723.2 L872.9 722.3 L884.7 723.2 L892.2 724.7 L899.8 722.3 L910.1 721.6 L916.5 722.5 L922.9 720.1 L928.4 724.3 L934.8 722.5 L940.3 723.2 L949.4 722.3 L958.6 724.0 L964.1 723.2 L969.6 721.4 L975.1 723.8 L982.4 720.5 L995.2 721.4 L1002.5 721.1 L1017.2 721.4 L1021.7 722.5 L1028.1 719.8 L1034.6 722.5 L1040.0 722.0 L1046.1 718.7 L1051.9 721.1 L1068.4 720.1 L1075.7 722.3 L1084.9 721.6 L1093.1 719.2 L1098.6 721.4 L1109.6 722.5 L1116.0 721.1 L1127.0 722.3 L1127.4 752.0 Z" fill="rgba(214,39,40,0.5)" stroke="none"/><path d="M470.2 752.0 L470.9 701.6 L475.5 687.2 L479.4 682.0 L482.0 684.6 L486.6 687.2 L489.2 686.5 L492.5 683.9 L494.9 685.2 L498.8 679.3 L502.4 682.6 L505.0 684.6 L508.0 688.5 L510.9 687.2 L514.1 688.5 L518.0 640.0 L522.6 571.8 L527.9 552.7 L532.5 409.0 L535.5 388.4 L544.0 529.8 L549.3 522.9 L557.0 288.6 L561.4 276.5 L576.6 512.0 L591.4 645.1 L597.2 644.3 L602.8 651.9 L609.0 655.8 L614.6 646.1 L620.4 662.3 L626.2 637.4 L631.9 645.8 L638.0 677.9 L644.9 687.8 L650.2 699.6 L656.8 697.2 L663.2 704.6 L670.1 710.0 L676.9 712.7 L690.7 719.2 L701.7 719.8 L710.1 723.0 L728.6 721.8 L737.0 724.3 L747.0 723.0 L757.1 724.0 L770.5 722.8 L777.3 721.8 L789.8 725.2 L800.8 723.5 L807.5 724.7 L820.9 724.7 L831.0 723.2 L844.4 722.0 L856.1 721.8 L862.8 723.2 L872.9 722.3 L884.7 723.2 L892.2 724.7 L899.8 722.3 L910.1 721.6 L916.5 722.5 L922.9 720.1 L928.4 724.3 L934.8 722.5 L940.3 723.2 L949.4 722.3 L958.6 724.0 L964.1 723.2 L969.6 721.4 L975.1 723.8 L982.4 720.5 L995.2 721.4 L1002.5 721.1 L1017.2 721.4 L1021.7 722.5 L1028.1 719.8 L1034.6 722.5 L1040.0 722.0 L1046.1 718.7 L1051.9 721.1 L1068.4 720.1 L1075.7 722.3 L1084.9 721.6 L1093.1 719.2 L1098.6 721.4 L1109.6 722.5 L1116.0 721.1 L1127.0 722.3" fill="none" stroke="#e0202a" stroke-width="1"/><g stroke="#000" stroke-width="2" fill="none"><line x1="470.3" y1="272" x2="470.3" y2="756" stroke-width="2.3"/><line x1="465" y1="755" x2="1131" y2="755"/><line x1="465" y1="755" x2="470" y2="755"/><line x1="465" y1="695" x2="470" y2="695"/><line x1="465" y1="635" x2="470" y2="635"/><line x1="465" y1="575" x2="470" y2="575"/><line x1="465" y1="514" x2="470" y2="514"/><line x1="465" y1="454" x2="470" y2="454"/><line x1="465" y1="394" x2="470" y2="394"/><line x1="465" y1="334" x2="470" y2="334"/><line x1="465" y1="273" x2="470" y2="273"/><line x1="470.5" y1="755" x2="470.5" y2="760"/><line x1="543.5" y1="755" x2="543.5" y2="760"/><line x1="617.5" y1="755" x2="617.5" y2="760"/><line x1="690.5" y1="755" x2="690.5" y2="760"/><line x1="763.5" y1="755" x2="763.5" y2="760"/><line x1="837.5" y1="755" x2="837.5" y2="760"/><line x1="910.5" y1="755" x2="910.5" y2="760"/><line x1="983.5" y1="755" x2="983.5" y2="760"/><line x1="1057.5" y1="755" x2="1057.5" y2="760"/><line x1="1130.5" y1="755" x2="1130.5" y2="760"/></g><line x1="470.95" y1="755" x2="470.95" y2="701" stroke="#e81c24" stroke-width="1.3"/><g font-family="Liberation Sans" font-size="10.5" fill="#222"><text x="461.5" y="758.7" text-anchor="end">0</text><text x="461.5" y="698.4" text-anchor="end">1E+07</text><text x="461.5" y="638.2" text-anchor="end">2E+07</text><text x="461.5" y="577.9" text-anchor="end">3E+07</text><text x="461.5" y="517.7" text-anchor="end">4E+07</text><text x="461.5" y="457.4" text-anchor="end">5E+07</text><text x="461.5" y="397.2" text-anchor="end">6E+07</text><text x="461.5" y="336.9" text-anchor="end">7E+07</text><text x="461.5" y="276.7" text-anchor="end">8E+07</text><text x="469.9" y="772.7" text-anchor="middle">0</text><text x="543.3" y="772.7" text-anchor="middle">20</text><text x="616.7" y="772.7" text-anchor="middle">40</text><text x="690.0" y="772.7" text-anchor="middle">60</text><text x="763.4" y="772.7" text-anchor="middle">80</text><text x="836.8" y="772.7" text-anchor="middle">100</text><text x="910.2" y="772.7" text-anchor="middle">120</text><text x="983.6" y="772.7" text-anchor="middle">140</text><text x="1056.9" y="772.7" text-anchor="middle">160</text><text x="1130.3" y="772.7" text-anchor="middle">180</text></g><text x="767.5" y="812.8" font-family="Liberation Sans" font-size="17.2" fill="#000" textLength="62.6" lengthAdjust="spacingAndGlyphs">Time (s)</text><text transform="translate(409.5,548.6) rotate(-90)" font-family="Liberation Sans" font-size="17" fill="#000" textLength="67" lengthAdjust="spacingAndGlyphs">Intensity</text><line x1="562" y1="276" x2="581" y2="260" stroke="#222" stroke-width="1" stroke-dasharray="3 1"/><text x="583" y="263.8" font-family="Liberation Sans" font-size="10.5" fill="#222" textLength="173" lengthAdjust="spacingAndGlyphs">TIC [003_Ex2_Orbitrap_CID.mzXML]</text><rect x="956" y="288" width="16" height="4" fill="#e0141e"/><text x="979.5" y="292.5" font-family="Liberation Sans" font-size="8.6" fill="#333" textLength="134.5" lengthAdjust="spacingAndGlyphs">TIC [003_Ex2_Orbitrap_CID.mzXML]</text></svg>
<div class="r" style="left:22px;top:870px;width:1266px;height:23px;background:#007acc;"></div>
<svg class="r" style="left:22px;top:874px" width="18" height="17" viewBox="0 0 18 17"><line x1="2.4" y1="2.3" x2="6.3" y2="15.6" stroke="#d8c8b0" stroke-width="1"/><path d="M3.3 4.3 L6 2.6 L9 2 L11.3 4 L13 5.5 L16.8 4.3 L15.5 7 L13 9.5 L11 8.5 L9 10 L6 10.8 L4.8 10 Z" fill="#2a2aa8"/><path d="M6 4 L9 3 L10.5 5 L8 7 Z" fill="#5a60d8"/><path d="M13.5 7 L16 5 L15 7.5 Z" fill="#c0c8f8"/></svg>
<div class="t" style="left:42.60px;top:877.43px;font-size:11.3px;line-height:11.3px;color:#ffffff;transform:scaleX(0.9817);transform-origin:0 0;">003_Ex2_Orbitrap_CID.mzXML</div>
<svg class="r" style="left:207px;top:876px" width="13.7" height="13.7" viewBox="0 0 13 13"><rect x="0" y="1" width="2.6" height="9" fill="#f00a0a"/><rect x="0" y="8" width="9" height="2.5" fill="#f00a0a"/><rect x="2.5" y="9.5" width="6.5" height="2.3" fill="#e80808"/><rect x="2.8" y="0" width="4.2" height="7" fill="#ffdc18"/><rect x="2.2" y="3" width="3.7" height="3.6" fill="#3cb048"/><rect x="8" y="2" width="3.8" height="2.8" fill="#40b040"/><rect x="2.2" y="6" width="3.9" height="3" fill="#5a68f0"/><rect x="7.2" y="5.3" width="3.5" height="5.4" fill="#b060a8"/><rect x="6.1" y="7.2" width="1.7" height="2.6" fill="#60b8f0"/></svg>
<div class="t" style="left:224.60px;top:877.93px;font-size:11.3px;line-height:11.3px;color:#ffffff;transform:scaleX(1.0368);transform-origin:0 0;">Use m/z Data Toolkits</div>
<svg class="r" style="left:342px;top:881px" width="7" height="4" viewBox="0 0 7 4"><path d="M0 0 L7 0 L3.5 4 Z" fill="#a89080"/></svg>
<svg class="r" style="left:353px;top:875px" width="15" height="15" viewBox="0 0 15 15"><circle cx="7.3" cy="7.5" r="6.4" fill="#45b2e6"/><path d="M7.5 1.2 Q12 1.5 13.6 6 Q13.5 10 11 12.5 Q10 10 11 8 Q9 7 8 8 Q6.5 6 8.5 4.5 Q8 3 7.5 1.2 Z" fill="#1b55a6"/><path d="M2 5 Q3 2.5 5.5 1.5" fill="none" stroke="#9fe0fa" stroke-width="1"/></svg>
<div class="t" style="left:372.00px;top:877.43px;font-size:11.3px;line-height:11.3px;color:#ffffff;transform:scaleX(0.9577);transform-origin:0 0;">100.86 MB</div>
<svg class="r" style="left:428px;top:874px" width="18" height="17" viewBox="0 0 18 17"><rect x="3.5" y="2.7" width="10.5" height="10.1" fill="#000"/><g stroke="#222" stroke-width="1" stroke-dasharray="1 1"><line x1="1.5" y1="3" x2="1.5" y2="12.5"/><line x1="16" y1="3" x2="16" y2="12.5"/><line x1="4" y1="0.8" x2="13.5" y2="0.8"/><line x1="4" y1="14.6" x2="13.5" y2="14.6"/></g></svg>
<div class="t" style="left:448.50px;top:877.43px;font-size:11.3px;line-height:11.3px;color:#ffffff;transform:scaleX(1.0296);transform-origin:0 0;">Memory: 418.97 MB</div>
<div class="r" style="left:558px;top:873px;width:100px;height:17px;background:#e6e6e6;box-sizing:border-box;border:1px solid #bcbcbc;"></div>
<svg class="r" style="left:659px;top:874px" width="16" height="16" viewBox="0 0 16 16"><circle cx="8" cy="8" r="7.5" fill="#3db45a"/><path d="M4 8 L7 11 L12 4.5" fill="none" stroke="#fff" stroke-width="1.8"/></svg>
<div class="t" style="left:678.10px;top:877.43px;font-size:11.3px;line-height:11.3px;color:#ffffff;transform:scaleX(1.0962);transform-origin:0 0;text-decoration:underline;">0/0</div>
<svg class="r" style="left:1273px;top:876px" width="14" height="14" viewBox="0 0 14 14"><rect x="10" y="2" width="2" height="2" fill="#fff"/><rect x="8" y="4" width="2" height="2" fill="#fff"/><rect x="10" y="4" width="2" height="2" fill="#fff"/><rect x="6" y="6" width="2" height="2" fill="#fff"/><rect x="8" y="6" width="2" height="2" fill="#fff"/><rect x="10" y="6" width="2" height="2" fill="#fff"/><rect x="4" y="8" width="2" height="2" fill="#fff"/><rect x="6" y="8" width="2" height="2" fill="#fff"/><rect x="8" y="8" width="2" height="2" fill="#fff"/><rect x="10" y="8" width="2" height="2" fill="#fff"/></svg>
</body></html>
